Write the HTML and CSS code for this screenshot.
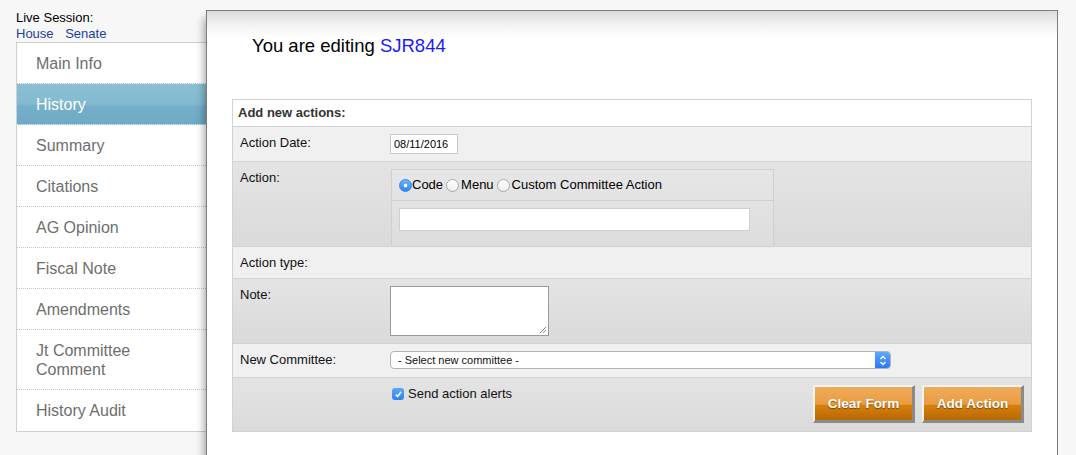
FILE: index.html
```html
<!DOCTYPE html>
<html>
<head>
<meta charset="utf-8">
<title>History</title>
<link rel="stylesheet" href="styles.css">
</head>
<body>
<div class="page">
  <aside class="sidebar">
    <div class="live">Live Session:</div>
    <div class="sessions"><a href="#">House</a> <a href="#" class="senate">Senate</a></div>
    <nav class="nav">
      <a href="#" class="nav-item">Main Info</a>
      <a href="#" class="nav-item active">History</a>
      <a href="#" class="nav-item">Summary</a>
      <a href="#" class="nav-item">Citations</a>
      <a href="#" class="nav-item">AG Opinion</a>
      <a href="#" class="nav-item">Fiscal Note</a>
      <a href="#" class="nav-item">Amendments</a>
      <a href="#" class="nav-item">Jt Committee Comment</a>
      <a href="#" class="nav-item last">History Audit</a>
    </nav>
  </aside>
  <main class="panel">
    <h1 class="editing">You are editing <a href="#">SJR844</a></h1>
    <div class="form">
      <div class="form-head">Add new actions:</div>
      <div class="row light">
        <div class="label">Action Date:</div>
        <div class="value"><input class="date" type="text" value="08/11/2016"></div>
      </div>
      <div class="row dark">
        <div class="label">Action:</div>
        <div class="value value-flush">
          <div class="action-box">
            <div class="radios">
              <span class="radio on"></span><span class="rtext">Code</span><span class="radio"></span><span class="rtext">Menu</span><span class="radio"></span><span class="rtext">Custom Committee Action</span>
            </div>
            <div class="action-input"><input class="code" type="text"></div>
          </div>
        </div>
      </div>
      <div class="row light type-row">
        <div class="label">Action type:</div>
        <div class="value"></div>
      </div>
      <div class="row dark">
        <div class="label">Note:</div>
        <div class="value">
          <div class="textarea">
            <svg class="grip" width="10" height="10" viewBox="0 0 10 10"><path d="M9 3 L3 9 M9 6 L6 9" stroke="#888" stroke-width="1"/></svg>
          </div>
        </div>
      </div>
      <div class="row light committee">
        <div class="label">New Committee:</div>
        <div class="value">
          <div class="select">
            <span class="select-text">- Select new committee -</span>
            <span class="select-btn"><svg width="8" height="11" viewBox="0 0 8 11"><path d="M1.5 4 L4 1.5 L6.5 4 M1.5 7 L4 9.5 L6.5 7" fill="none" stroke="#fff" stroke-width="1.4"/></svg></span>
          </div>
        </div>
      </div>
      <div class="row dark actions">
        <div class="label"></div>
        <div class="value action-bar">
          <label class="alert"><span class="check"><svg width="9" height="9" viewBox="0 0 9 9"><path d="M1.8 4.6 L3.6 6.6 L7.2 1.8" fill="none" stroke="#fff" stroke-width="1.6"/></svg></span>Send action alerts</label>
          <div class="buttons">
            <button class="btn">Clear Form</button>
            <button class="btn">Add Action</button>
          </div>
        </div>
      </div>
    </div>
  </main>
</div>
</body>
</html>
```

FILE: styles.css
```css
html, body {
  margin: 0;
  padding: 0;
  background: #f7f7f7;
  overflow: hidden;
}
body {
  font-family: "Liberation Sans", Arial, Helvetica, sans-serif;
  font-size: 13px;
  color: #000;
}
.page {
  display: flex;
  align-items: flex-start;
  padding-top: 10px;
}
.sidebar {
  width: 190px;
  margin-left: 16px;
  flex: none;
}
.live {
  line-height: 16px;
}
.sessions {
  line-height: 16px;
}
.sessions a {
  color: #1b3ea3;
  text-decoration: none;
}
.sessions .senate {
  margin-left: 8px;
}
.nav {
  display: flex;
  flex-direction: column;
  background: #fff;
  border: 1px solid #cfcfcf;
  border-right: none;
}
.nav-item {
  display: block;
  padding: 11px 19px 10px 19px;
  line-height: 19px;
  font-size: 16px;
  color: #6e6e6e;
  text-decoration: none;
  border-bottom: 1px dotted #c4c4c4;
}
.nav-item.last {
  border-bottom: none;
  padding-bottom: 11px;
}
.nav-item.active {
  color: #fff;
  background: linear-gradient(#8bc0d4, #83bad0 50%, #76afca 55%, #6fa9c5);
  border-bottom-color: #d6e8ef;
}
.panel {
  flex: 1;
  margin-right: 18px;
  min-height: 460px;
  background: linear-gradient(#dcdcdc, #f2f2f2 14px, #fff 26px);
  border: 1px solid #7d7d7d;
  border-bottom: none;
  box-shadow: -5px 5px 8px -3px rgba(0, 0, 0, 0.35);
}
.editing {
  margin: 0;
  padding: 24px 0 0 45px;
  font-size: 18.5px;
  font-weight: normal;
  line-height: 22px;
  color: #000;
}
.editing a {
  color: #1a1aff;
  text-decoration: none;
}
.form {
  margin: 42px 25px 0 25px;
  border: 1px solid #d2d2d2;
}
.form-head {
  padding: 5px 5px;
  line-height: 16px;
  font-weight: bold;
  color: #333;
  background: #fff;
}
.row {
  display: grid;
  grid-template-columns: 157px 1fr;
  border-top: 1px solid #d2d2d2;
}
.row.light {
  background: #f0f0f0;
}
.row.dark {
  background: linear-gradient(#e4e4e4, #dadada);
}
.label {
  padding: 7px 7px;
  line-height: 18px;
  color: #111;
}
.value {
  padding: 7px 7px 7px 0;
  min-height: 18px;
}
.type-row .label {
  padding-bottom: 6px;
}
.type-row .value {
  padding-bottom: 6px;
}
.value-flush {
  padding-bottom: 0;
}
.committee .value {
  padding-bottom: 8px;
}
.date {
  box-sizing: border-box;
  width: 68px;
  height: 20px;
  margin: 0;
  padding: 0 3px;
  border: 1px solid #c8c8c8;
  font-family: "Liberation Sans", Arial, sans-serif;
  font-size: 11px;
  color: #000;
  background: #fff;
}
.action-box {
  width: 381px;
  margin-left: 1px;
  border: 1px solid #d0d0d0;
  border-bottom: none;
  background: linear-gradient(#e6e6e6, #dddddd);
}
.radios {
  display: flex;
  align-items: center;
  height: 30px;
  padding-left: 7px;
  border-bottom: 1px solid #d0d0d0;
  line-height: 16px;
}
.radio {
  box-sizing: border-box;
  width: 13px;
  height: 13px;
  margin: 0 2px 0 3px;
  border-radius: 50%;
  border: 1px solid #a8a8a8;
  background: linear-gradient(#ffffff, #eeeeee);
  flex: none;
}
.radio.on {
  margin: 0;
  border-color: #3a86e6;
  background: radial-gradient(circle at 50% 50%, #fff 0, #fff 1.5px, transparent 2.2px), linear-gradient(#6ab4fb, #2c86f3);
}
.action-input {
  padding: 7px 21px 15px 7px;
}
.code {
  display: block;
  box-sizing: border-box;
  width: 351px;
  height: 23px;
  margin: 0;
  border: 1px solid #cfcfcf;
  background: #fff;
}
.textarea {
  position: relative;
  box-sizing: border-box;
  width: 159px;
  height: 50px;
  border: 1px solid #9a9a9a;
  background: #fff;
}
.grip {
  position: absolute;
  right: 1px;
  bottom: 1px;
}
.select {
  display: flex;
  align-items: center;
  box-sizing: border-box;
  width: 501px;
  height: 18px;
  border: 1px solid #b4b4b4;
  border-radius: 4px;
  background: #fff;
  overflow: hidden;
}
.select-text {
  flex: 1;
  padding-left: 7px;
  font-size: 11px;
  color: #111;
}
.select-btn {
  display: flex;
  align-items: center;
  justify-content: center;
  width: 15px;
  height: 18px;
  background: linear-gradient(#62a9fd, #2677f5);
}
.action-bar {
  display: flex;
  justify-content: space-between;
  align-items: flex-start;
  padding-right: 7px;
  padding-bottom: 8px;
}
.alert {
  display: flex;
  align-items: center;
  line-height: 18px;
  padding-left: 2px;
  font-size: 13px;
  color: #111;
}
.check {
  display: flex;
  align-items: center;
  justify-content: center;
  width: 12px;
  height: 12px;
  margin-right: 4px;
  border-radius: 3px;
  background: linear-gradient(#5aa6fb, #2b82f0);
}
.buttons {
  display: flex;
  gap: 7px;
}
.btn {
  box-sizing: border-box;
  width: 102px;
  height: 38px;
  margin: 0;
  padding: 0;
  border-style: solid;
  border-width: 2px 3px 3px 2px;
  border-color: #f4f4f4 #8a8a8a #8a8a8a #f4f4f4;
  background: linear-gradient(#f0ac5a, #e99b40 52%, #d6800c 56%, #b86802);
  font-family: "Liberation Sans", Arial, sans-serif;
  font-size: 13.5px;
  font-weight: bold;
  color: #fff;
  text-shadow: 0 1px 1px rgba(90, 40, 0, 0.7);
  cursor: pointer;
}
```
